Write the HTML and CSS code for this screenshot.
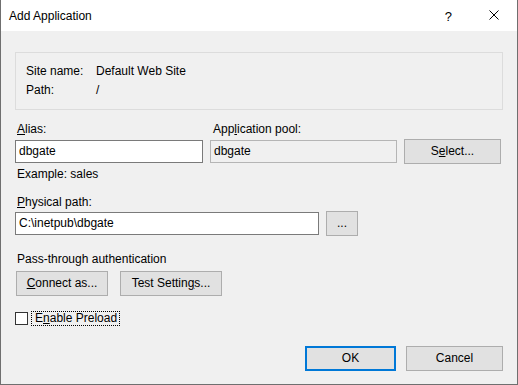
FILE: index.html
```html
<!DOCTYPE html>
<html>
<head>
<meta charset="utf-8">
<link rel="stylesheet" href="styles.css">
</head>
<body>
<div class="window">
  <div class="titlebar">
    <span class="title">Add Application</span>
    <span class="help">?</span>
    <span class="close"><svg width="10" height="10" viewBox="0 0 10 10"><path d="M0.5 0.5 L9.5 9.5 M9.5 0.5 L0.5 9.5" stroke="#000" stroke-width="1" fill="none"/></svg></span>
  </div>
  <div class="content">
    <div class="groupbox">
      <span>Site name:</span><span>Default Web Site</span>
      <span>Path:</span><span>/</span>
    </div>
    <div class="field-row">
      <div class="field alias">
        <label><u>A</u>lias:</label>
        <div class="input">dbgate</div>
      </div>
      <div class="field pool">
        <label class="pool-label">App<u>l</u>ication pool:</label>
        <div class="input readonly">dbgate</div>
      </div>
      <button class="btn select">S<u>e</u>lect...</button>
    </div>
    <div class="example">Example: sales</div>
    <div class="field phys">
      <label><u>P</u>hysical path:</label>
      <div class="phys-row">
        <div class="input phys-input">C:\inetpub\dbgate</div>
        <button class="btn browse">...</button>
      </div>
    </div>
    <div class="pass">Pass-through authentication</div>
    <div class="btn-row">
      <button class="btn connect"><u>C</u>onnect as...</button>
      <button class="btn test">Test Settin<u>g</u>s...</button>
    </div>
    <div class="check-row">
      <span class="checkbox"></span>
      <span class="check-label">E<u>n</u>able Preload</span>
    </div>
    <div class="footer">
      <button class="btn ok">OK</button>
      <button class="btn cancel">Cancel</button>
    </div>
  </div>
</div>
</body>
</html>
```
FILE: styles.css
```css
html, body {
  margin: 0;
  padding: 0;
}
body {
  width: 518px;
  height: 385px;
  font-family: "Liberation Sans", Arial, sans-serif;
  font-size: 12px;
  color: #000;
  background: #f0f0f0;
  overflow: hidden;
}
u {
  text-decoration: underline;
  text-underline-offset: 1px;
}
.window {
  box-sizing: border-box;
  width: 518px;
  height: 385px;
  border: 1px solid #6f6f6f;
  border-top: none;
  display: flex;
  flex-direction: column;
  background: #f0f0f0;
}
.titlebar {
  flex: none;
  height: 31px;
  background: #fff;
  display: flex;
  align-items: center;
  position: relative;
}
.title {
  padding-left: 8px;
  padding-top: 2px;
  line-height: 15px;
}
.help {
  margin-left: auto;
  font-size: 13px;
  line-height: 15px;
  padding-top: 1px;
  margin-right: 37px;
}
.close {
  width: 10px;
  height: 10px;
  margin-right: 18px;
  margin-bottom: 1px;
  display: block;
}
.close svg {
  display: block;
}
.content {
  flex: 1;
  padding: 21px 14px 0 14px;
  display: flex;
  flex-direction: column;
}
.groupbox {
  border: 1px solid #dcdcdc;
  padding: 9px 10px 9px 10px;
  display: grid;
  grid-template-columns: 70px auto;
  line-height: 19px;
}
.field-row {
  display: flex;
  align-items: flex-end;
  margin-top: 12px;
}
.field {
  display: flex;
  flex-direction: column;
}
.field label {
  line-height: 15px;
  padding-left: 2px;
  margin-bottom: 3px;
}
.field .pool-label {
  padding-left: 3px;
}
.alias {
  width: 188px;
}
.pool {
  width: 187px;
  margin-left: 7px;
}
.input {
  box-sizing: border-box;
  height: 23px;
  border: 1px solid #7a7a7a;
  background: #fff;
  padding: 0 3px;
  line-height: 21px;
  white-space: nowrap;
}
.input.readonly {
  background: #f0f0f0;
  border-color: #b5b5b5;
}
.btn {
  box-sizing: border-box;
  height: 25px;
  border: 1px solid #adadad;
  background: #e1e1e1;
  font-family: "Liberation Sans", Arial, sans-serif;
  font-size: 12px;
  color: #000;
  padding: 0;
  line-height: 23px;
  text-align: center;
}
.select {
  width: 97px;
  margin-left: 7px;
  margin-bottom: -1px;
}
.example {
  line-height: 15px;
  margin-top: 4px;
  padding-left: 2px;
}
.phys {
  margin-top: 13px;
}
.phys label {
  margin-bottom: 1px;
}
.phys-row {
  display: flex;
  align-items: center;
}
.phys-input {
  width: 304px;
}
.browse {
  width: 32px;
  margin-left: 7px;
}
.pass {
  line-height: 15px;
  margin-top: 16px;
  padding-left: 2px;
}
.btn-row {
  display: flex;
  margin-top: 4px;
  padding-left: 1px;
  gap: 12px;
}
.connect {
  width: 92px;
}
.test {
  width: 102px;
}
.check-row {
  display: flex;
  align-items: flex-start;
  margin-top: 15px;
  height: 15px;
}
.checkbox {
  box-sizing: border-box;
  width: 13px;
  height: 13px;
  margin-top: 1px;
  border: 1px solid #333;
  background: #fff;
}
.check-label {
  box-sizing: border-box;
  height: 15px;
  line-height: 13px;
  margin-left: 3px;
  padding: 0 2px 0 3px;
  border: 1px dotted #000;
}
.footer {
  display: flex;
  justify-content: flex-end;
  margin-top: 20px;
  gap: 10px;
}
.ok {
  width: 91px;
  border: 2px solid #0078d7;
  line-height: 21px;
}
.cancel {
  width: 97px;
}
```
